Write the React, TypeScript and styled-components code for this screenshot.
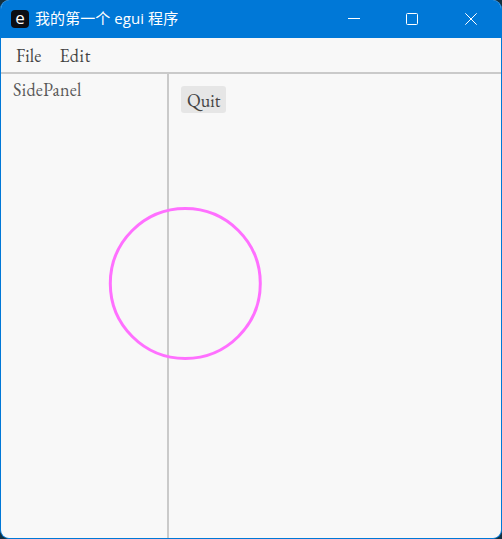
import React from "react";
import styled, { createGlobalStyle } from "styled-components";

const GlobalStyle = createGlobalStyle`
  * { box-sizing: border-box; }
  body { margin: 0; background: #14303f; overflow: hidden; }
`;

const Window = styled.div`
  position: relative;
  display: flex;
  flex-direction: column;
  width: 502px;
  height: 539px;
  overflow: hidden;
  border: 1px solid #0078d7;
  border-top: 0;
  border-radius: 9px;
  background: #f8f8f8;
  color: #585858;
  font-family: "EB Garamond", "Liberation Serif", serif;
  font-size: 18px;
  line-height: 22px;
`;

const TitleBar = styled.header`
  display: flex;
  align-items: center;
  flex: 0 0 38px;
  padding: 0 1px 0 10px;
  background: #0078d7;
  color: #fff;
`;

const AppIcon = styled.div`
  display: flex;
  justify-content: center;
  width: 18px;
  height: 18px;
  border-radius: 4px;
  background: #0c0e14;
  font: 400 17px/15px "Open Sans", "Noto Sans", sans-serif;
`;

const Title = styled.h1`
  flex: 1;
  margin: 0 0 2px 6px;
  font: 400 15px/20px "Open Sans", "Noto Sans CJK SC", sans-serif;
  letter-spacing: 0.07px;
  white-space: nowrap;
`;

const WindowButton = styled.button`
  display: flex;
  align-items: center;
  justify-content: center;
  width: 58.5px;
  height: 38px;
  padding: 0;
  border: 0;
  background: none;
  color: #fff;
`;

const MenuBar = styled.nav`
  display: flex;
  flex: 0 0 36px;
  gap: 18px;
  padding: 7px 0 0 15px;
  border-bottom: 2px solid #cacaca;
`;

const TextButton = styled.button<{ $filled?: boolean; $tracking: number }>`
  height: ${(p) => (p.$filled ? 27 : 22)}px;
  width: ${(p) => (p.$filled ? "44.5px" : "auto")};
  padding: ${(p) => (p.$filled ? "2px 0 0 1px" : "0")};
  border: 0;
  border-radius: 3px;
  background: ${(p) => (p.$filled ? "#e6e6e6" : "none")};
  color: #444;
  font: inherit;
  letter-spacing: ${(p) => p.$tracking}px;
`;

const Body = styled.div`
  display: flex;
  flex: 1;
`;

const SidePanel = styled.aside`
  flex: 0 0 168px;
  padding: 5px 0 0 12px;
  border-right: 2px solid #cacaca;
  letter-spacing: 0.3px;
`;

const CentralPanel = styled.main`
  flex: 1;
  padding: 12px;
`;

const CircleOverlay = styled.svg`
  position: absolute;
  left: 107px;
  top: 206px;
  pointer-events: none;
`;

export default function App() {
  return (
    <>
      <GlobalStyle />
      <Window>
        <TitleBar>
          <AppIcon>e</AppIcon>
          <Title>我的第一个 egui 程序</Title>
          <WindowButton aria-label="Minimize">
            <svg width="12" height="12" stroke="currentColor">
              <path d="M0 5.5H12" />
            </svg>
          </WindowButton>
          <WindowButton aria-label="Maximize">
            <svg width="12" height="12" fill="none" stroke="currentColor">
              <rect x=".5" y=".5" width="11" height="11" rx="1" />
            </svg>
          </WindowButton>
          <WindowButton aria-label="Close">
            <svg width="12" height="12" stroke="currentColor">
              <path d="M.3.3 11.7 11.7M11.7.3.3 11.7" />
            </svg>
          </WindowButton>
        </TitleBar>
        <MenuBar>
          <TextButton $tracking={0.1}>File</TextButton>
          <TextButton $tracking={0.7}>Edit</TextButton>
        </MenuBar>
        <Body>
          <SidePanel>SidePanel</SidePanel>
          <CentralPanel>
            <TextButton $filled $tracking={0}>Quit</TextButton>
          </CentralPanel>
        </Body>
        <CircleOverlay width="156" height="156" fill="none">
          <circle cx="77.3" cy="77.5" r="75" stroke="#ff70ff" strokeWidth="3" />
        </CircleOverlay>
      </Window>
    </>
  );
}
